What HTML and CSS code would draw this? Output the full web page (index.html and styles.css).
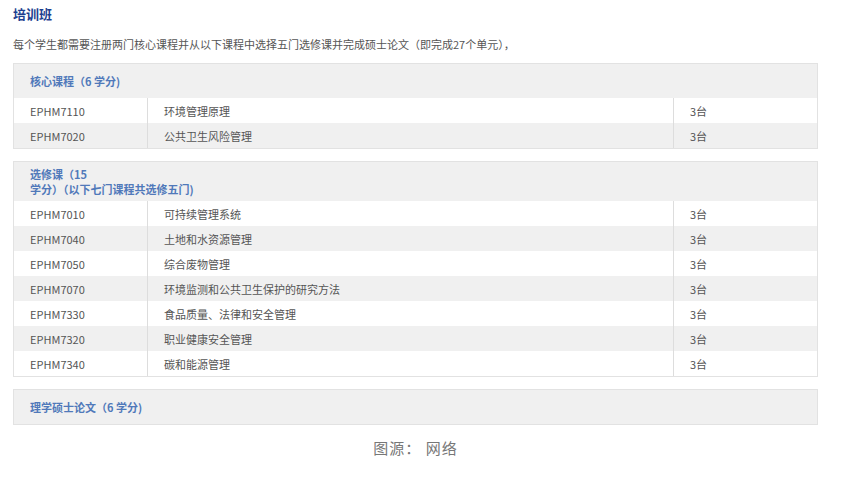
FILE: index.html
```html
<!DOCTYPE html>
<html lang="zh">
<head>
<meta charset="utf-8">
<link rel="stylesheet" href="styles.css">
</head>
<body>
<div class="page">
  <h2 class="title">培训班</h2>
  <p class="intro">每个学生都需要注册两门核心课程并从以下课程中选择五门选修课并完成硕士论文（即完成27个单元），</p>

  <div class="block first">
    <div class="block-head">核心课程（6 学分)</div>
    <div class="row"><div class="c1">EPHM7110</div><div class="c2">环境管理原理</div><div class="c3">3台</div></div>
    <div class="row alt"><div class="c1">EPHM7020</div><div class="c2">公共卫生风险管理</div><div class="c3">3台</div></div>
  </div>

  <div class="block">
    <div class="block-head tall">选修课（15<br>学分）（以下七门课程共选修五门)</div>
    <div class="row"><div class="c1">EPHM7010</div><div class="c2">可持续管理系统</div><div class="c3">3台</div></div>
    <div class="row alt"><div class="c1">EPHM7040</div><div class="c2">土地和水资源管理</div><div class="c3">3台</div></div>
    <div class="row"><div class="c1">EPHM7050</div><div class="c2">综合废物管理</div><div class="c3">3台</div></div>
    <div class="row alt"><div class="c1">EPHM7070</div><div class="c2">环境监测和公共卫生保护的研究方法</div><div class="c3">3台</div></div>
    <div class="row"><div class="c1">EPHM7330</div><div class="c2">食品质量、法律和安全管理</div><div class="c3">3台</div></div>
    <div class="row alt"><div class="c1">EPHM7320</div><div class="c2">职业健康安全管理</div><div class="c3">3台</div></div>
    <div class="row"><div class="c1">EPHM7340</div><div class="c2">碳和能源管理</div><div class="c3">3台</div></div>
  </div>

  <div class="block">
    <div class="block-head">理学硕士论文（6 学分)</div>
  </div>

  <div class="caption">图源： 网络</div>
</div>
</body>
</html>
```

FILE: styles.css
```css
html, body {
  margin: 0;
  padding: 0;
  background: #ffffff;
}
body {
  font-family: "Noto Sans CJK SC", "Noto Sans", sans-serif;
  color: #555555;
}
.page {
  width: 805px;
  padding: 5px 0 0 13px;
}
.title {
  margin: 0;
  font-size: 13px;
  line-height: 18px;
  font-weight: bold;
  color: #1d3f8f;
}
.intro {
  margin: 13px 0 0 0;
  font-size: 11px;
  line-height: 16px;
  color: #555555;
}
.block {
  margin-top: 12px;
  border: 1px solid #e2e2e2;
  background: #f0f0f0;
}
.block.first {
  margin-top: 11px;
}
.block-head {
  height: 34px;
  display: flex;
  align-items: center;
  padding-left: 16px;
  font-size: 11px;
  font-weight: bold;
  color: #5079ba;
  line-height: 15px;
}
.block-head.tall {
  height: 39px;
}
.row {
  display: grid;
  grid-template-columns: 133px 526px 1fr;
  height: 25px;
  background: #ffffff;
  font-size: 11px;
  color: #555555;
}
.row.alt {
  background: #f0f0f0;
}
.row > div {
  display: flex;
  align-items: center;
}
.c1 {
  padding-left: 16px;
}
.c2 {
  padding-left: 16px;
  border-left: 1px solid #dddddd;
}
.c3 {
  padding-left: 16px;
  border-left: 1px solid #dddddd;
}
.caption {
  margin-top: 12px;
  text-align: center;
  font-size: 15px;
  line-height: 22px;
  color: #777777;
  letter-spacing: 1px;
}
```
